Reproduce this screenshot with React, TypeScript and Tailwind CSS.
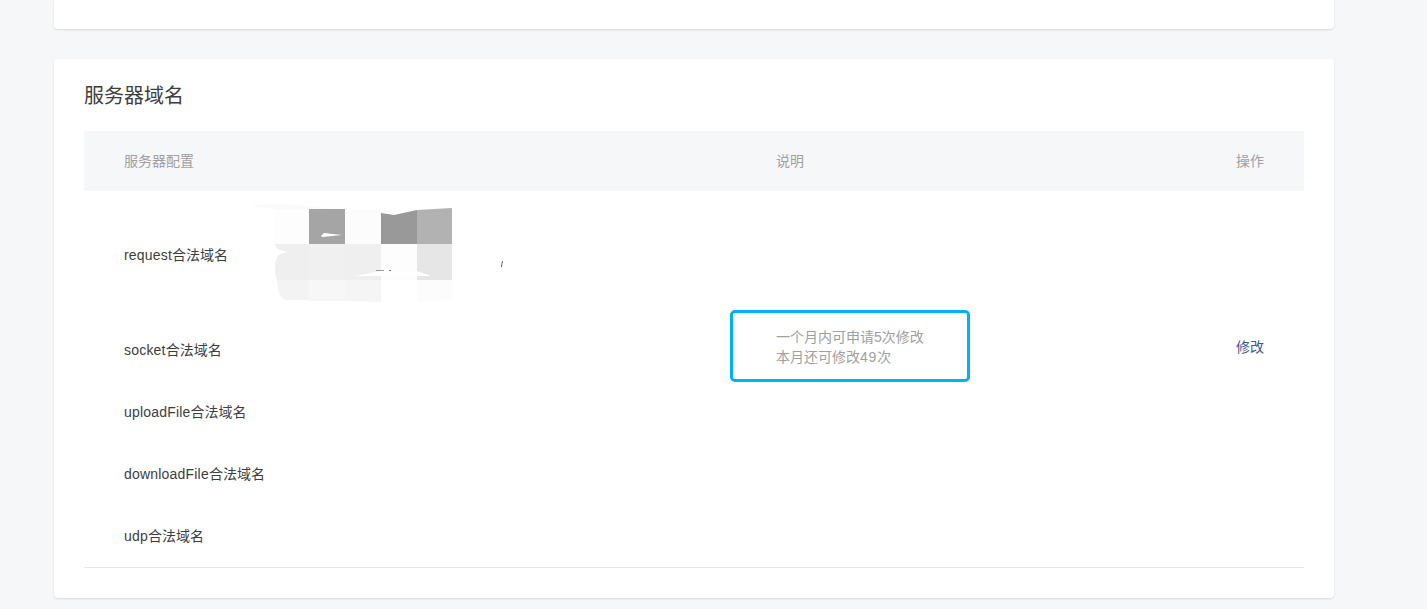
const font = { fontFamily: '"Liberation Sans", "Noto Sans CJK SC", sans-serif' };

function Mosaic() {
  return (
    <svg className="absolute left-[166px] top-[12px]" width="270" height="100" viewBox="0 0 270 100" aria-hidden="true">
      <defs>
        <filter id="soft" x="-5%" y="-5%" width="110%" height="110%">
          <feGaussianBlur stdDeviation="0.5" />
        </filter>
      </defs>
      <g filter="url(#soft)">
        <path d="M0 3 C30 -1 50 2 80 6 L59 6 L25 6 Z" fill="#fafafa" />
        <rect x="25" y="6" width="34" height="35" fill="#fdfdfd" />
        <rect x="59" y="6" width="36" height="35" fill="#a5a5a5" />
        <path d="M71 33 L74 30 L92 32 L72 34 Z" fill="#ffffff" />
        <rect x="95" y="6" width="36" height="35" fill="#fcfcfc" />
        <path d="M131 10 L144 12 L167 7 L167 41 L131 41 Z" fill="#999999" />
        <path d="M167 7 L202 5 L202 41 L167 41 Z" fill="#b2b2b2" />
        <path d="M25 41 L59 41 L59 77 L27 77 C24 70 24 58 28 53 C32 49 40 50 36 48 C30 48 26 46 25 41 Z" fill="#efefef" />
        <rect x="59" y="41" width="36" height="36" fill="#f0f0f0" />
        <rect x="95" y="41" width="36" height="36" fill="#efefef" />
        <rect x="131" y="41" width="36" height="36" fill="#fdfdfd" />
        <rect x="167" y="41" width="35" height="36" fill="#e6e6e6" />
        <path d="M105 73 L131 68 L167 68 L181 73 Z" fill="#ffffff" />
        <path d="M27 77 L59 77 L59 97 L38 97 C30 97 28 90 27 77 Z" fill="#f3f3f3" />
        <rect x="59" y="77" width="36" height="21" fill="#f7f7f7" />
        <path d="M95 77 L131 77 L131 99 L95 98 Z" fill="#f5f5f5" />
        <path d="M167 77 L202 77 L202 97 L167 99 Z" fill="#fcfcfc" />
        <rect x="126" y="67" width="8" height="1" fill="#9a9a9a" />
        <rect x="139" y="67" width="2" height="1" fill="#777777" />
        <path d="M251 64 L252 58 L252.800 58 L252 64 Z" fill="#555555" />
      </g>
    </svg>
  );
}

function NameRow({ name, children, className }: { name: string; children?: React.ReactNode; className: string }) {
  return (
    <div className={`relative flex ${className}`}>
      <div className="flex w-[647px] shrink-0 items-center pl-10 text-[14px] leading-5 text-[#3e3e3e]">
        <span className="tracking-[0.2px]">{name}</span>
        <span>合法域名</span>
      </div>
      {children}
    </div>
  );
}

export default function App() {
  return (
    <div className="h-[609px] overflow-hidden bg-[#f6f7f9]" style={font}>
      <div className="ml-[54px] h-[29px] w-[1280px] rounded-b-[4px] bg-white shadow-[0_1px_2px_rgba(150,150,150,0.3)]" />
      <section className="ml-[54px] mt-[30px] h-[539px] w-[1280px] rounded-[4px] bg-white px-[30px] pt-[21px] shadow-[0_1px_2px_rgba(150,150,150,0.3)]">
        <h2 className="h-[31px] text-[20px] font-normal leading-8 text-[#3e3e3e]">服务器域名</h2>
        <div className="mt-5 w-[1220px]">
          <div className="flex h-[60px] items-center bg-[#f6f7f9] text-[14px] text-[#a0a0a0]">
            <div className="w-[692px] shrink-0 pl-10">服务器配置</div>
            <div className="flex-1">说明</div>
            <div className="pr-10">操作</div>
          </div>
          <div className="border-b border-[#e7e7eb]">
            <NameRow name="request" className="h-[128px]">
              <Mosaic />
            </NameRow>
            <NameRow name="socket" className="h-[62px]">
              <div className="-ml-px -mt-[9px] h-[72px] w-[240px] shrink-0 rounded-[5px] border-[3px] border-[#00b0ff] bg-white pl-[43px] pt-[14px] text-[14px] leading-5 text-[#a0a0a0]">
                <p>一个月内可申请5次修改</p>
                <p>本月还可修改<span className="tracking-[0.8px]">49</span>次</p>
              </div>
              <div className="flex-1 pr-10 pt-[18px] text-right text-[14px] leading-5 text-[#3b5a8f]">修改</div>
            </NameRow>
            <NameRow name="uploadFile" className="h-[62px]" />
            <NameRow name="downloadFile" className="h-[62px]" />
            <NameRow name="udp" className="h-[62px]" />
          </div>
        </div>
      </section>
    </div>
  );
}
